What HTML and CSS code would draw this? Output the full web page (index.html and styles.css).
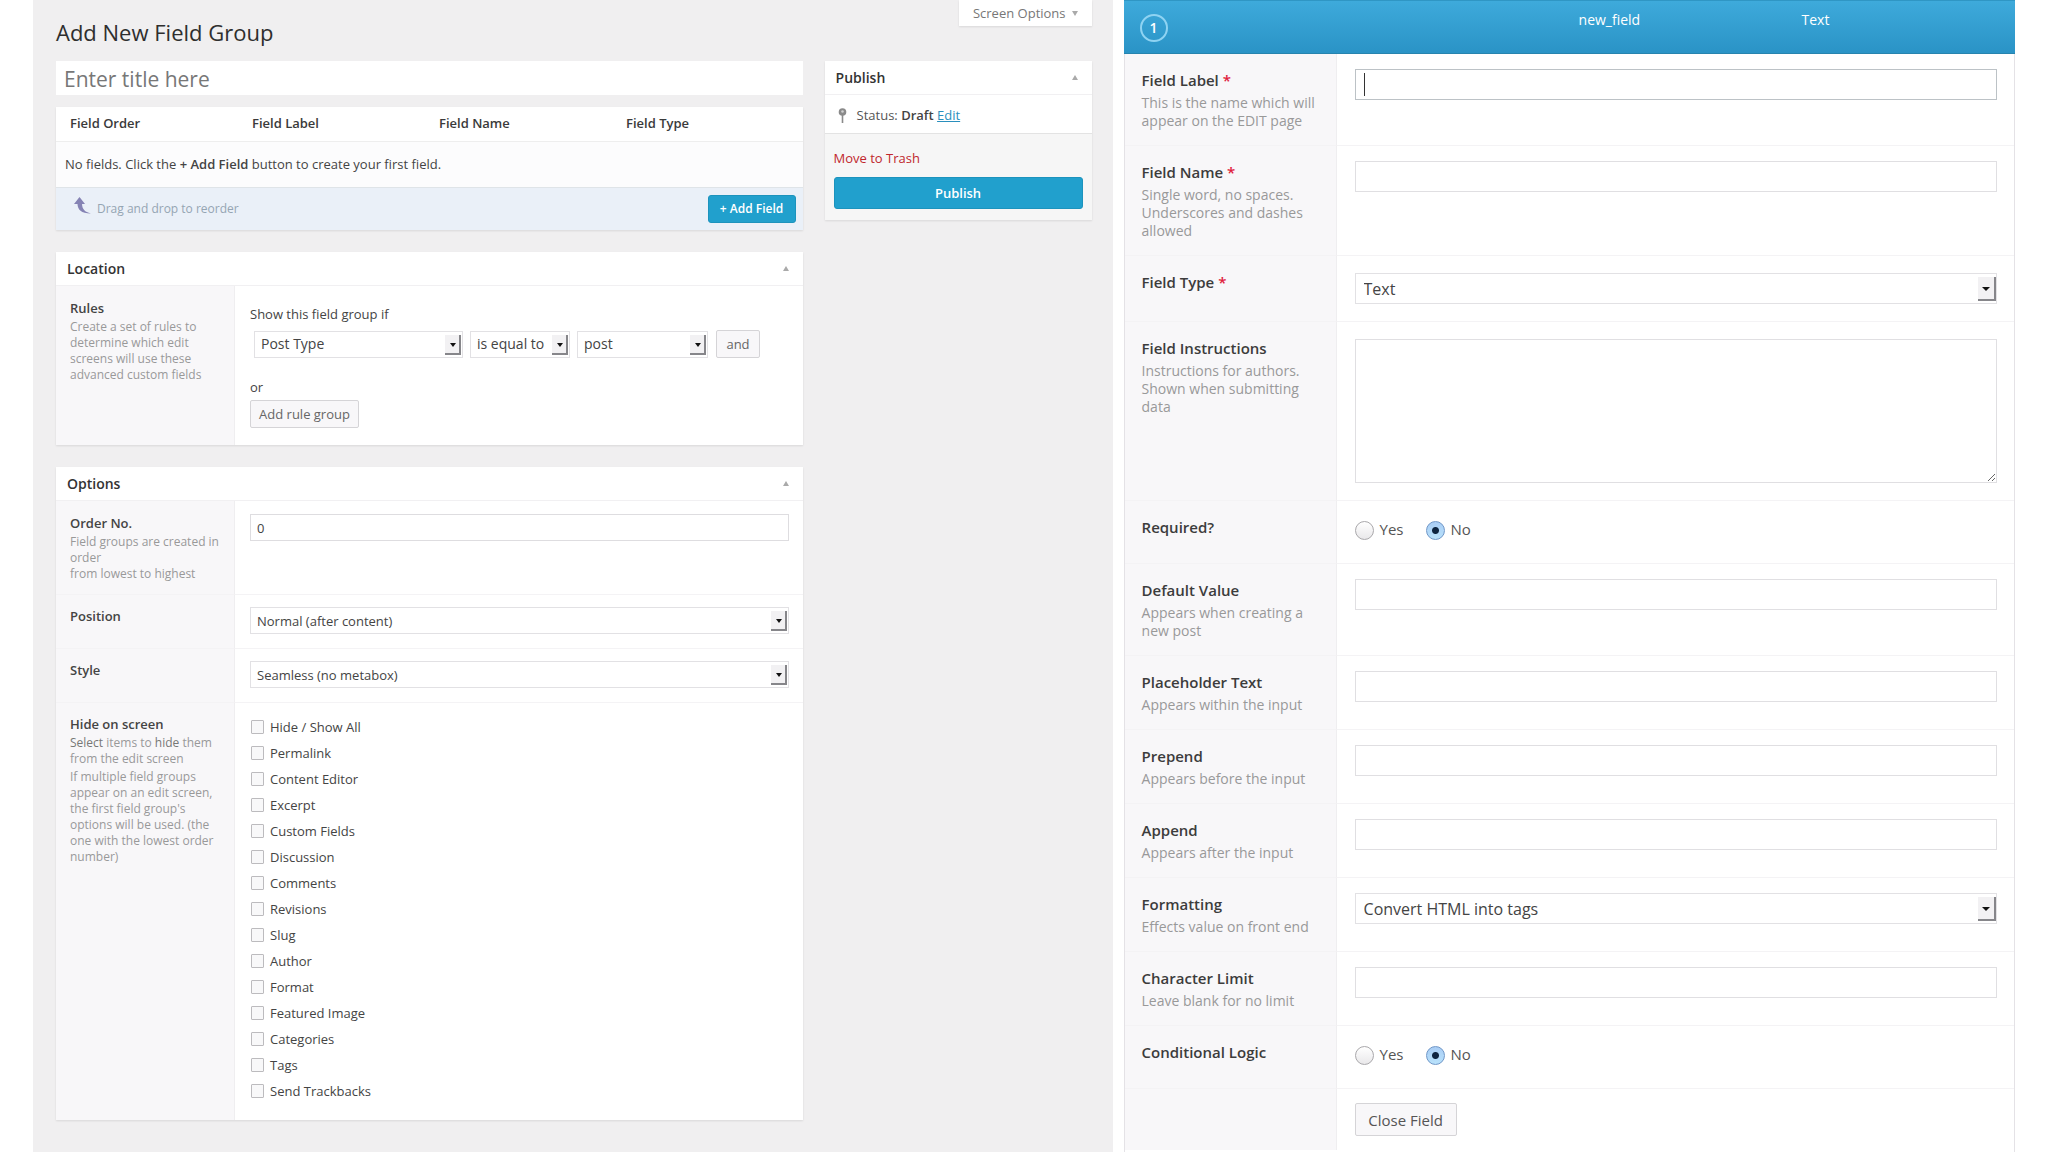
FILE: index.html
```html
<!DOCTYPE html>
<html lang="en">
<head>
<meta charset="utf-8">
<title>Add New Field Group</title>
<link rel="stylesheet" href="styles.css">
</head>
<body>
<div class="page">
  <main class="editor">
    <header class="topbar">
      <h1 class="page-title">Add New Field Group</h1>
      <button class="screen-options" type="button">Screen Options <span class="tri-down"></span></button>
    </header>
    <div class="columns">
      <div class="main-col">
        <input class="title-input" type="text" placeholder="Enter title here" aria-label="Title">

        <section class="fields box">
          <table class="fields-table">
            <colgroup><col class="col-order"><col class="col-std"><col class="col-std"><col></colgroup>
            <thead><tr><th>Field Order</th><th>Field Label</th><th>Field Name</th><th>Field Type</th></tr></thead>
            <tbody><tr><td colspan="4">No fields. Click the <strong>+ Add Field</strong> button to create your first field.</td></tr></tbody>
          </table>
          <div class="fields-foot">
            <svg class="reorder-icon" width="18" height="18" viewBox="0 0 18 18" aria-hidden="true"><path d="M5.500 0 0 7h3.500c.2 5.500 3.500 9.500 13.500 9.500-6.500-1.500-8.700-4.500-9-9.500H11z" fill="#8583b4"/></svg>
            <span class="reorder-text">Drag and drop to reorder</span>
            <button class="btn-primary btn-add" type="button">+ Add Field</button>
          </div>
        </section>

        <section class="box">
          <h2 class="box-head">Location <span class="tri-up"></span></h2>
          <div class="row row-location">
            <div class="cell-label"><h3 class="label">Rules</h3><p class="desc">Create a set of rules to<br>determine which edit<br>screens will use these<br>advanced custom fields</p></div>
            <div class="cell-rules">
              <p class="rule-text">Show this field group if</p>
              <div class="rule-line">
                <span class="select sel-type"><select aria-label="Parameter"><option>Post Type</option></select></span>
                <span class="select sel-op"><select aria-label="Operator"><option>is equal to</option></select></span>
                <span class="select sel-value"><select aria-label="Value"><option>post</option></select></span>
                <button class="btn btn-and" type="button">and</button>
              </div>
              <p class="rule-text">or</p>
              <button class="btn btn-group" type="button">Add rule group</button>
            </div>
          </div>
        </section>

        <section class="box">
          <h2 class="box-head">Options <span class="tri-up"></span></h2>
          <div class="row">
            <div class="cell-label"><label class="label" for="order">Order No.</label><p class="desc">Field groups are created in<br>order<br>from lowest to highest</p></div>
            <div class="cell-field"><input class="text-input" id="order" type="text" value="0"></div>
          </div>
          <div class="row">
            <div class="cell-label"><label class="label" for="position">Position</label></div>
            <div class="cell-field"><span class="select"><select id="position"><option>Normal (after content)</option></select></span></div>
          </div>
          <div class="row">
            <div class="cell-label"><label class="label" for="style">Style</label></div>
            <div class="cell-field"><span class="select"><select id="style"><option>Seamless (no metabox)</option></select></span></div>
          </div>
          <div class="row">
            <div class="cell-label"><h3 class="label">Hide on screen</h3><p class="desc"><b>Select</b> items to <b>hide</b> them<br>from the edit screen</p><p class="desc">If multiple field groups<br>appear on an edit screen,<br>the first field group's<br>options will be used. (the<br>one with the lowest order<br>number)</p></div>
            <div class="cell-checks">
              <label class="check"><input type="checkbox">Hide / Show All</label>
              <label class="check"><input type="checkbox">Permalink</label>
              <label class="check"><input type="checkbox">Content Editor</label>
              <label class="check"><input type="checkbox">Excerpt</label>
              <label class="check"><input type="checkbox">Custom Fields</label>
              <label class="check"><input type="checkbox">Discussion</label>
              <label class="check"><input type="checkbox">Comments</label>
              <label class="check"><input type="checkbox">Revisions</label>
              <label class="check"><input type="checkbox">Slug</label>
              <label class="check"><input type="checkbox">Author</label>
              <label class="check"><input type="checkbox">Format</label>
              <label class="check"><input type="checkbox">Featured Image</label>
              <label class="check"><input type="checkbox">Categories</label>
              <label class="check"><input type="checkbox">Tags</label>
              <label class="check"><input type="checkbox">Send Trackbacks</label>
            </div>
          </div>
        </section>
      </div>

      <aside class="box publish">
        <h2 class="box-head">Publish <span class="tri-up"></span></h2>
        <div class="status">
          <svg class="pin" width="9" height="15" viewBox="0 0 9 15" aria-hidden="true"><circle cx="4.500" cy="4" r="3.800" fill="#8a8a8a"/><circle cx="4.500" cy="3.500" r="1.300" fill="#d0d0d0"/><path d="M3.700 7h1.600v8H3.700z" fill="#8a8a8a"/></svg>
          <span>Status: <strong>Draft</strong> <a class="edit" href="#">Edit</a></span>
        </div>
        <div class="publish-foot">
          <a class="trash" href="#">Move to Trash</a>
          <button class="btn-primary btn-publish" type="button">Publish</button>
        </div>
      </aside>
    </div>
  </main>

  <section class="field-panel">
    <header class="field-head">
      <span class="badge">1</span>
      <span class="head-name">new_field</span>
      <span class="head-type">Text</span>
    </header>
    <div class="frow">
      <div class="fl"><label class="flabel" for="f-label">Field Label <span class="req">*</span></label><p class="fdesc">This is the name which will<br>appear on the EDIT page</p></div>
      <div class="ff"><input class="finput finput-active" id="f-label" type="text"></div>
    </div>
    <div class="frow">
      <div class="fl"><label class="flabel" for="f-name">Field Name <span class="req">*</span></label><p class="fdesc">Single word, no spaces.<br>Underscores and dashes<br>allowed</p></div>
      <div class="ff"><input class="finput" id="f-name" type="text"></div>
    </div>
    <div class="frow">
      <div class="fl"><label class="flabel" for="f-type">Field Type <span class="req">*</span></label></div>
      <div class="ff ff-select"><span class="select select-lg"><select id="f-type"><option>Text</option></select></span></div>
    </div>
    <div class="frow">
      <div class="fl"><label class="flabel" for="f-inst">Field Instructions</label><p class="fdesc">Instructions for authors.<br>Shown when submitting<br>data</p></div>
      <div class="ff"><textarea class="farea" id="f-inst"></textarea></div>
    </div>
    <div class="frow">
      <div class="fl"><h3 class="flabel">Required?</h3></div>
      <div class="ff ff-radio"><label class="radio"><input type="radio" name="required">Yes</label><label class="radio"><input type="radio" name="required" checked>No</label></div>
    </div>
    <div class="frow">
      <div class="fl"><label class="flabel" for="f-default">Default Value</label><p class="fdesc">Appears when creating a<br>new post</p></div>
      <div class="ff"><input class="finput" id="f-default" type="text"></div>
    </div>
    <div class="frow">
      <div class="fl"><label class="flabel" for="f-ph">Placeholder Text</label><p class="fdesc">Appears within the input</p></div>
      <div class="ff"><input class="finput" id="f-ph" type="text"></div>
    </div>
    <div class="frow">
      <div class="fl"><label class="flabel" for="f-pre">Prepend</label><p class="fdesc">Appears before the input</p></div>
      <div class="ff"><input class="finput" id="f-pre" type="text"></div>
    </div>
    <div class="frow">
      <div class="fl"><label class="flabel" for="f-app">Append</label><p class="fdesc">Appears after the input</p></div>
      <div class="ff"><input class="finput" id="f-app" type="text"></div>
    </div>
    <div class="frow">
      <div class="fl"><label class="flabel" for="f-fmt">Formatting</label><p class="fdesc">Effects value on front end</p></div>
      <div class="ff"><span class="select select-lg"><select id="f-fmt"><option>Convert HTML into tags</option></select></span></div>
    </div>
    <div class="frow">
      <div class="fl"><label class="flabel" for="f-limit">Character Limit</label><p class="fdesc">Leave blank for no limit</p></div>
      <div class="ff"><input class="finput" id="f-limit" type="text"></div>
    </div>
    <div class="frow">
      <div class="fl"><h3 class="flabel">Conditional Logic</h3></div>
      <div class="ff ff-radio"><label class="radio"><input type="radio" name="logic">Yes</label><label class="radio"><input type="radio" name="logic" checked>No</label></div>
    </div>
    <div class="frow">
      <div class="fl"></div>
      <div class="ff ff-close"><button class="btn btn-close" type="button">Close Field</button></div>
    </div>
  </section>
</div>
</body>
</html>
```
FILE: styles.css
```css
* { box-sizing: border-box; }
body {
  margin: 0;
  background: #fff;
  color: #444;
  font: 13px/18px "Open Sans", "Noto Sans", sans-serif;
}
h1, h2, h3, p { margin: 0; }
input, select, textarea, button { font: inherit; color: inherit; margin: 0; }
button { cursor: pointer; }
strong { font-weight: 600; }

.page {
  display: grid;
  grid-template-columns: 1079fr 891fr;
  gap: 11px;
  padding: 0 33px;
}

/* Group editor */
.editor { background: #f0eff0; padding: 0 21px 32px 23px; }
.topbar { display: flex; justify-content: space-between; align-items: flex-start; height: 61px; }
.page-title { font-size: 22px; line-height: 32px; font-weight: 400; color: #2e2e2e; padding-top: 16px; }
.screen-options {
  display: flex; align-items: center; gap: 6px;
  height: 26px; padding: 0 14px;
  border: 0; background: #fff; color: #777;
  box-shadow: 0 1px 2px rgba(0, 0, 0, .1);
}
.tri-down { border: 3px solid transparent; border-top: 5px solid #aaa; border-bottom: 0; }
.tri-up { border: 3px solid transparent; border-bottom: 5px solid #aaa; border-top: 0; }
.columns { display: grid; grid-template-columns: 1fr 267px; gap: 22px; align-items: start; }
.main-col { display: flex; flex-direction: column; min-width: 0; }
.title-input {
  height: 34px; padding: 2px 8px 0; margin-bottom: 12px;
  border: 0; background: #fff; font-size: 21px;
}
.title-input::placeholder { color: #777; opacity: 1; }
.box { background: #fff; box-shadow: 0 1px 2px rgba(0, 0, 0, .1); margin-bottom: 22px; }
.box-head {
  display: flex; align-items: center; justify-content: space-between;
  height: 34px; padding: 0 14px 0 11px;
  font-size: 14px; font-weight: 600; color: #333;
  border-bottom: 1px solid #f1f0f2;
}

.fields-table { width: 100%; table-layout: fixed; border-collapse: collapse; color: #444; }
.col-order { width: 182px; }
.col-std { width: 187px; }
.fields-table th {
  height: 34px; padding: 0 14px 2px; text-align: left;
  font-size: 13px; font-weight: 600; color: #3a3a3a;
  border-bottom: 1px solid #eee;
}
.fields-table td { height: 46px; padding: 0 9px; background: #fcfcfd; }
.fields-foot {
  display: flex; align-items: center;
  height: 43px; padding: 0 7px 0 18px;
  background: #eaf0f8; border-top: 1px solid #dfe4e8;
}
.reorder-icon { align-self: flex-start; margin-top: 9px; }
.reorder-text { margin-left: 5px; font-size: 12px; color: #95a5b3; }
.btn-primary {
  border: 1px solid #1c93bd; border-radius: 3px;
  background: #21a0cd; color: #fff; font-weight: 600;
}
.btn-add { margin-left: auto; width: 88px; height: 28px; padding: 0; font-size: 12px; }

.row { display: grid; grid-template-columns: 179px 1fr; }
.cell-label { background: #f8f7f9; border-right: 1px solid #efeef0; padding: 13px 0 12px 14px; }
.label { display: block; font-size: 13px; line-height: 18px; font-weight: 600; color: #444; }
.desc { font-size: 12px; line-height: 16px; color: #999; padding-top: 2px; white-space: nowrap; }
.desc b { font-weight: 400; color: #777; }
.cell-field { padding: 13px 14px 14px 15px; }
.row-location { min-height: 158px; }
.cell-rules { padding: 18px 14px 17px 15px; }
.rule-text { line-height: 20px; }
.rule-line { display: flex; align-items: center; gap: 7px; padding: 6px 0 19px 4px; }
.btn {
  border: 1px solid #d5d4d7; border-radius: 2px;
  background: #f8f7f9; color: #666; padding: 0;
}
.btn-and { width: 44px; height: 28px; }
.btn-group { width: 109px; height: 28px; margin-top: 3px; }

.text-input { display: block; width: 100%; height: 27px; padding: 0 6px; border: 1px solid #dedde0; background: #fff; }

/* Drop-downs with a raised arrow key at the right */
.select { display: block; position: relative; }
.select select {
  display: block; width: 100%; height: 27px; padding: 0 22px 0 6px;
  appearance: none; border: 1px solid #e2e1e4; border-radius: 0; background: #fff;
  font-size: 14px;
}
.cell-field .select select { font-size: 13px; }
.select::before {
  content: ""; position: absolute; right: 2px; top: 4px; bottom: 3px; width: 14px;
  background: #f2f1f3; border-right: 2px solid #86868a; border-bottom: 2px solid #86868a;
  pointer-events: none;
}
.select::after {
  content: ""; position: absolute; right: 7px; top: 12px;
  border: 3px solid transparent; border-top: 4px solid #111; border-bottom: 0;
  pointer-events: none;
}
.sel-type { width: 209px; }
.sel-op { width: 100px; }
.sel-value { width: 131px; margin-right: 1px; }

.cell-checks { padding: 12px 14px 16px 16px; }
.check { display: flex; align-items: center; gap: 6px; height: 26px; }
.check input {
  appearance: none; width: 13px; height: 14px;
  border: 1px solid #bcbbbe; border-radius: 1px; background: #f8f8f9;
}
.row + .row > div { border-top: 1px solid #f4f3f5; padding-top: 12px; }
.row + .row > .cell-checks { padding-top: 11px; }

/* Publish box */
.publish { background: #f6f6f6; margin-bottom: 0; }
.publish .box-head { background: #fff; }
.status {
  display: flex; align-items: center; gap: 10px;
  height: 39px; padding: 2px 13px 0;
  background: #fff; border-bottom: 1px solid #e3e3e3; color: #555;
}
.status strong { color: #444; }
.edit { color: #2a8fbd; }
.publish-foot { display: flex; flex-direction: column; gap: 10px; align-items: flex-start; padding: 15px 9px 11px; }
.trash { color: #c0272d; text-decoration: none; }
.btn-publish { width: 100%; height: 32px; font-size: 13px; }

/* Field settings */
.field-panel { border: 1px solid #e4e2e6; border-top: 0; border-bottom-color: #ccc; background: #fff; }
.field-head {
  display: grid; grid-template-columns: 439px 223px 1fr;
  height: 54px; margin: 0 -1px; padding: 10px 0 0 16px;
  background: linear-gradient(#3eaadb, #2a93c6);
  border-top: 1px solid #2f96c4; border-bottom: 1px solid #2784ae;
  color: #fff; font-size: 14px;
}
.badge {
  width: 28px; height: 28px; margin-top: 3px;
  border: 2px solid #8fd3f2; border-radius: 50%;
  text-align: center; line-height: 23px; font-size: 14px; font-weight: 600;
}
.frow { display: grid; grid-template-columns: 212px 1fr; }
.frow + .frow > div { border-top: 1px solid #f4f3f5; }
.fl { background: #f8f7f9; border-right: 1px solid #efeef0; padding: 16px 0 15px 17px; }
.flabel { display: block; font-size: 15px; line-height: 20px; font-weight: 600; color: #3c3c3c; }
.req { color: #e0203c; }
.fdesc { font-size: 14px; line-height: 18px; color: #999; padding-top: 4px; white-space: nowrap; }
.ff { padding: 15px 17px 14px 18px; }
.ff-select { padding-top: 17px; padding-bottom: 17px; }
.finput { display: block; width: 100%; height: 31px; padding: 0 8px; border: 1px solid #e0dfe2; background: #fff; font-size: 15px; }
.finput-active {
  border-color: #bcc2c6; caret-color: transparent;
  background: linear-gradient(#333, #333) no-repeat 8px 3px / 1px 23px #fff;
}
.select-lg select { height: 31px; padding-left: 8px; font-size: 16px; line-height: 24px; }
.select-lg::before { width: 16px; right: 1px; }
.select-lg::after { right: 7px; top: 14px; border-width: 4px; border-bottom-width: 0; }
.farea { display: block; width: 100%; height: 144px; margin: 2px 0 3px; border: 1px solid #e0dfe2; background: #fff; resize: vertical; }
.ff-radio { display: flex; gap: 15px; padding: 16px 18px 22px; }
.radio { display: flex; align-items: center; gap: 6px; height: 24px; min-width: 56px; font-size: 15px; color: #555; }
.radio input {
  appearance: none; width: 19px; height: 19px; margin-top: 3px; border-radius: 50%;
  border: 1px solid #a9a8ab; background: linear-gradient(#fff, #e9e8ea);
}
.radio input:checked {
  border-color: #6f97c8;
  background: radial-gradient(circle, #0d2440 0 3px, transparent 4px), linear-gradient(#a9cdf5, #b9e2fb);
}
.ff-close { padding: 14px 18px 14px; }
.btn-close { width: 102px; height: 33px; font-size: 15px; color: #555; }
```
